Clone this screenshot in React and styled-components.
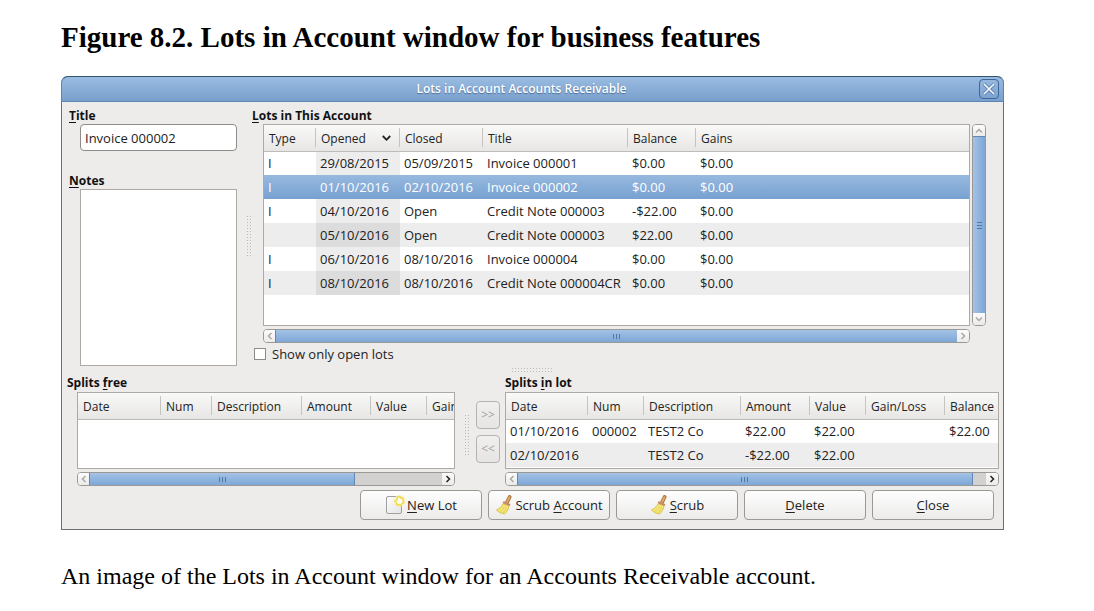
import React, { useState } from 'react';
import styled, { createGlobalStyle, css } from 'styled-components';

const lots = [
  { type: 'I', opened: '29/08/2015', closed: '05/09/2015', title: 'Invoice 000001', balance: '$0.00', gains: '$0.00' },
  { type: 'I', opened: '01/10/2016', closed: '02/10/2016', title: 'Invoice 000002', balance: '$0.00', gains: '$0.00' },
  { type: 'I', opened: '04/10/2016', closed: 'Open', title: 'Credit Note 000003', balance: '-$22.00', gains: '$0.00' },
  { type: '', opened: '05/10/2016', closed: 'Open', title: 'Credit Note 000003', balance: '$22.00', gains: '$0.00' },
  { type: 'I', opened: '06/10/2016', closed: '08/10/2016', title: 'Invoice 000004', balance: '$0.00', gains: '$0.00' },
  { type: 'I', opened: '08/10/2016', closed: '08/10/2016', title: 'Credit Note 000004CR', balance: '$0.00', gains: '$0.00' },
];

const splits = [
  ['01/10/2016', '000002', 'TEST2 Co', '$22.00', '$22.00', '', '$22.00'],
  ['02/10/2016', '', 'TEST2 Co', '-$22.00', '$22.00', '', ''],
];

const freeHeads = ['Date', 'Num', 'Description', 'Amount', 'Value', 'Gain/Loss'];
const lotHeads = [...freeHeads, 'Balance'];

const Chevron = ({ dir }) => {
  const paths = {
    left: 'M5.5 1 2.5 4 5.5 7',
    right: 'M2.5 1 5.5 4 2.5 7',
    up: 'M1 5.5 4 2.5 7 5.5',
    down: 'M1 2.5 4 5.5 7 2.5',
  };
  return (
    <svg width="8" height="8" viewBox="0 0 8 8" fill="none" stroke="currentColor" strokeWidth="1.5">
      <path d={paths[dir]} />
    </svg>
  );
};

const SortIcon = () => (
  <svg width="13" height="7" viewBox="0 0 13 7" fill="none" stroke="#222" strokeWidth="1.8">
    <path d="M.8 1 4.5 4.8 8.2 1" />
  </svg>
);

const CloseIcon = () => (
  <svg width="14" height="14" viewBox="0 0 14 14" fill="none">
    <path d="M2 2 12 12M12 2 2 12" stroke="#41689a" strokeWidth="3.2" opacity=".6" />
    <path d="M2 2 12 12M12 2 2 12" stroke="#f4f7fb" strokeWidth="1.7" />
  </svg>
);

const NewIcon = () => (
  <svg width="20" height="20" viewBox="0 0 20 20" fill="none">
    <defs>
      <linearGradient id="sheet" x1="0" y1="0" x2="1" y2="1">
        <stop offset="0" stopColor="#fdfdfd" />
        <stop offset="1" stopColor="#e2e3e2" />
      </linearGradient>
    </defs>
    <rect x="1.5" y="1.5" width="15" height="17" rx="1.5" fill="url(#sheet)" stroke="#a0a19f" />
    <circle cx="14.3" cy="5.7" r="5.6" fill="#fbf2a8" opacity=".75" />
    <path
      d="m14.4 1.4 1.5 1.9 2.5-.1-.5 2.4 1.3 2-2.3.9-.8 2.3-2-1.3-2.4.6v-2.4L9.900 6.100l2.200-1.100.3-2.300Z"
      fill="#fffef4"
      stroke="#f0dc4a"
      strokeWidth="1.5"
      strokeLinejoin="round"
    />
  </svg>
);

const BroomIcon = () => (
  <svg width="18" height="20" viewBox="0 0 18 20" fill="none">
    <path d="M14.6 2 12 7.4" stroke="#a8743c" strokeWidth="3.8" strokeLinecap="round" />
    <path d="M14.4 2.2 11.900 7.400" stroke="#e0a968" strokeWidth="2" strokeLinecap="round" />
    <path
      d="M8 8.600C6.800 11.600 4.400 13.600 1.400 15c2 2 4.800 3.600 8.200 4 2.400-2.200 4-4.800 4.400-8.200L8 8.600Z"
      fill="#f5e678"
      stroke="#d0b63c"
      strokeWidth=".8"
      strokeLinejoin="round"
    />
    <path d="M9.400 11.500c-.9 2.300-2.400 3.700-4.600 4.800M11.400 12c-.5 2.300-1.800 4.200-3.600 6" stroke="#dcc652" strokeWidth=".8" />
    <path d="m9 7.500 5.200 2.200" stroke="#c98a6a" strokeWidth="2.200" strokeLinecap="round" />
  </svg>
);

const ScrollBar = ({ vertical, size = 100, backOff = true, nextOff = true }) => (
  <Track $vertical={vertical}>
    <ScrollButton type="button" disabled={backOff} aria-label={vertical ? 'Up' : 'Left'}>
      <Chevron dir={vertical ? 'up' : 'left'} />
    </ScrollButton>
    <Trough $vertical={vertical}>
      <Thumb $vertical={vertical} $size={size}>
        <i />
        <i />
        <i />
      </Thumb>
    </Trough>
    <ScrollButton type="button" disabled={nextOff} aria-label={vertical ? 'Down' : 'Right'}>
      <Chevron dir={vertical ? 'down' : 'right'} />
    </ScrollButton>
  </Track>
);

const SplitTable = ({ labelledBy, heads, widths, rows, minWidth }) => (
  <Table aria-labelledby={labelledBy} $minWidth={minWidth}>
    <colgroup>
      {widths.map((w, i) => (
        <Col key={i} $width={w} />
      ))}
    </colgroup>
    <thead>
      <tr>
        {heads.map(h => (
          <Head key={h}>{h}</Head>
        ))}
      </tr>
    </thead>
    <tbody>
      {rows.map(row => (
        <Row key={row[0]}>
          {row.map((cell, i) => (
            <Cell key={i}>{cell}</Cell>
          ))}
        </Row>
      ))}
    </tbody>
  </Table>
);

const App = () => {
  const [selected, setSelected] = useState(1);
  const [openOnly, setOpenOnly] = useState(false);

  return (
    <Page>
      <GlobalStyle />
      <Heading>Figure 8.2. Lots in Account window for business features</Heading>
      <Window>
        <TitleBar>
          <WindowTitle>Lots in Account Accounts Receivable</WindowTitle>
          <WindowClose type="button" aria-label="Close window">
            <CloseIcon />
          </WindowClose>
        </TitleBar>

        <TopPane>
          <Details>
            <Caption as="label" htmlFor="lot-title">
              <u>T</u>itle
            </Caption>
            <TitleInput id="lot-title" defaultValue="Invoice 000002" />
            <NotesCaption as="label" htmlFor="lot-notes">
              <u>N</u>otes
            </NotesCaption>
            <Notes id="lot-notes" />
          </Details>
          <Grip $vertical />
          <LotsPane>
            <Caption id="lots-caption">
              <u>L</u>ots in This Account
            </Caption>
            <LotsGrid>
              <Frame $height={202}>
                <Table aria-labelledby="lots-caption">
                  <colgroup>
                    <Col $width={52} />
                    <Col $width={84} />
                    <Col $width={83} />
                    <Col $width={145} />
                    <Col $width={68} />
                    <Col />
                  </colgroup>
                  <thead>
                    <tr>
                      <Head>Type</Head>
                      <Head>
                        <SortHead>
                          Opened <SortIcon />
                        </SortHead>
                      </Head>
                      <Head>Closed</Head>
                      <Head>Title</Head>
                      <Head>Balance</Head>
                      <Head>Gains</Head>
                    </tr>
                  </thead>
                  <tbody>
                    {lots.map((lot, i) => (
                      <Row key={lot.opened} $selected={i === selected} onClick={() => setSelected(i)}>
                        <Cell>{lot.type}</Cell>
                        <Cell $sorted>{lot.opened}</Cell>
                        <Cell>{lot.closed}</Cell>
                        <Cell>{lot.title}</Cell>
                        <Cell>{lot.balance}</Cell>
                        <Cell>{lot.gains}</Cell>
                      </Row>
                    ))}
                  </tbody>
                </Table>
              </Frame>
              <ScrollBar vertical />
              <ScrollBar />
            </LotsGrid>
            <CheckLabel>
              <CheckBox checked={openOnly} onChange={e => setOpenOnly(e.target.checked)} />
              Show only open lots
            </CheckLabel>
          </LotsPane>
        </TopPane>

        <GripRow>
          <Grip />
        </GripRow>

        <BottomPane>
          <FreePane>
            <Caption id="free-caption">
              Splits <u>f</u>ree
            </Caption>
            <SplitBody $indent>
              <Frame $height={77}>
                <SplitTable
                  labelledBy="free-caption"
                  heads={freeHeads}
                  widths={[83, 51, 90, 69, 56, 79]}
                  rows={[]}
                  minWidth={428}
                />
              </Frame>
              <ScrollBar size={75} nextOff={false} />
            </SplitBody>
          </FreePane>
          <Grip $vertical $low />
          <MoveButtons>
            <MoveButton type="button" disabled>
              &gt;&gt;
            </MoveButton>
            <MoveButton type="button" disabled>
              &lt;&lt;
            </MoveButton>
          </MoveButtons>
          <LotPane>
            <Caption id="in-lot-caption">
              Splits <u>i</u>n lot
            </Caption>
            <SplitBody>
              <Frame $height={77}>
                <SplitTable
                  labelledBy="in-lot-caption"
                  heads={lotHeads}
                  widths={[82, 56, 97, 69, 56, 79, null]}
                  rows={splits}
                />
              </Frame>
              <ScrollBar size={97} nextOff={false} />
            </SplitBody>
          </LotPane>
        </BottomPane>

        <Actions>
          <ActionButton type="button">
            <NewIcon />
            <span>
              <u>N</u>ew Lot
            </span>
          </ActionButton>
          <ActionButton type="button">
            <BroomIcon />
            <span>
              Scrub <u>A</u>ccount
            </span>
          </ActionButton>
          <ActionButton type="button">
            <BroomIcon />
            <span>
              <u>S</u>crub
            </span>
          </ActionButton>
          <ActionButton type="button">
            <span>
              <u>D</u>elete
            </span>
          </ActionButton>
          <ActionButton type="button">
            <span>
              <u>C</u>lose
            </span>
          </ActionButton>
        </Actions>
      </Window>
      <Description>An image of the Lots in Account window for an Accounts Receivable account.</Description>
    </Page>
  );
};

const GlobalStyle = createGlobalStyle`
  * {
    box-sizing: border-box;
  }
  body {
    margin: 0;
    background: #fff;
  }
  button, input, textarea {
    font: inherit;
    color: inherit;
    margin: 0;
  }
  svg {
    display: block;
    flex: none;
  }
  u {
    text-underline-offset: 2px;
  }
`;

const Page = styled.main`
  padding: 20px 90px 20px 61px;
  font-family: 'Liberation Serif', 'Times New Roman', serif;
  color: #000;
`;

const Heading = styled.h1`
  margin: 0 0 22px;
  font-size: 29px;
  line-height: 34px;
`;

const Description = styled.p`
  margin: 30px 0 0;
  font-size: 24px;
  line-height: 32px;
`;

const Window = styled.section`
  border: 1px solid #6f6f6f;
  border-top: 0;
  border-radius: 7px 7px 0 0;
  background: #edeceb;
  font-family: 'Open Sans', 'Noto Sans', sans-serif;
  font-size: 13px;
  line-height: 16px;
  color: #222;
`;

const TitleBar = styled.header`
  display: flex;
  align-items: center;
  height: 26px;
  margin: 0 -1px;
  padding: 0 4px 0 2px;
  border: 1px solid #5d86b8;
  border-top-color: #31566f;
  border-radius: 7px 7px 0 0;
  background: linear-gradient(#9abce2, #799fcc);
`;

const WindowTitle = styled.h2`
  flex: 1;
  margin: 0;
  text-align: center;
  font-size: 12px;
  font-weight: 600;
  line-height: 18px;
  color: #fff;
  text-shadow: 0 1px 1px #4d6f99;
`;

const WindowClose = styled.button`
  display: flex;
  align-items: center;
  justify-content: center;
  width: 20px;
  height: 20px;
  padding: 0;
  border: 1px solid #3f6797;
  border-radius: 4px;
  background: linear-gradient(#94b7de, #7ca3d1);
`;

const Caption = styled.h3`
  display: block;
  margin: 0;
  font-size: 12px;
  font-weight: 700;
  line-height: 16px;
  color: #111;
`;

const NotesCaption = styled(Caption)`
  margin-top: 22px;
`;

const TopPane = styled.div`
  display: flex;
  padding: 6px 17px 0 7px;
`;

const Details = styled.div`
  display: flex;
  flex-direction: column;
  width: 168px;
`;

const TitleInput = styled.input`
  height: 27px;
  margin-left: 11px;
  padding: 1px 4px 0;
  border: 1px solid #8e8c89;
  border-radius: 4px;
  background: #fff;
  outline: 0;
`;

const Notes = styled.textarea`
  flex: 1;
  margin-left: 11px;
  padding: 4px;
  border: 1px solid #adaaa6;
  background: #fff;
  resize: none;
  outline: 0;
`;

const Grip = styled.div`
  width: ${p => (p.$vertical ? 6 : 42)}px;
  height: ${p => (p.$vertical ? 42 : 6)}px;
  background: linear-gradient(#c4c2bf, #c4c2bf) 0 0 / 1px 100%;
  background: conic-gradient(from 270deg at 1px 1px, #bab8b4 90deg, transparent 0) 0 0 / 3px 3px;
  ${p =>
    p.$vertical &&
    css`
      align-self: center;
      margin: 0 0 0 10px;
    `}
  ${p =>
    p.$low &&
    css`
      margin-top: 10px;
    `}
`;

const GripRow = styled.div`
  display: flex;
  justify-content: center;
  padding: 2px 0 1px;
`;

const LotsPane = styled.div`
  flex: 1;
  min-width: 0;
  margin-left: -1px;
`;

const LotsGrid = styled.div`
  display: grid;
  grid-template-columns: minmax(0, 1fr) 14px;
  gap: 3px 2px;
  margin-left: 11px;
`;

const Frame = styled.div`
  min-height: ${p => p.$height}px;
  border: 1px solid #adaaa6;
  background: #fff;
  overflow: hidden;
`;

const Table = styled.table`
  width: 100%;
  min-width: ${p => (p.$minWidth ? `${p.$minWidth}px` : '0')};
  table-layout: fixed;
  border-collapse: collapse;
`;

const Col = styled.col`
  width: ${p => (p.$width ? `${p.$width}px` : 'auto')};
`;

const Head = styled.th`
  height: 26px;
  padding: 2px 5px 0;
  border-bottom: 1px solid #bdbbb8;
  background:
    linear-gradient(#c6c4c1, #c6c4c1) right center / 1px 19px no-repeat,
    linear-gradient(#f9f9f8, #e7e6e4);
  font-size: 12px;
  font-weight: 400;
  text-align: left;
  white-space: nowrap;

  &:last-child {
    background: linear-gradient(#f9f9f8, #e7e6e4);
  }
`;

const SortHead = styled.span`
  display: flex;
  align-items: center;
  justify-content: space-between;
`;

const Cell = styled.td`
  height: 24px;
  padding: 0 4px;
  white-space: nowrap;
  background: ${p => (p.$sorted ? 'rgba(0, 0, 0, 0.07)' : 'transparent')};
`;

const Row = styled.tr`
  cursor: default;

  &:nth-child(even) {
    background: #ededed;
  }

  ${p =>
    p.$selected &&
    css`
      && {
        background: linear-gradient(#97b9df, #77a1d1);
        color: #fff;
      }
      ${Cell} {
        background: transparent;
      }
    `}
`;

const Track = styled.div`
  display: flex;
  flex-direction: ${p => (p.$vertical ? 'column' : 'row')};
  ${p => (p.$vertical ? 'width' : 'height')}: 14px;
  border: 1px solid #9b9995;
  border-radius: 4px;
  background: #f4f4f3;
  overflow: hidden;
`;

const ScrollButton = styled.button`
  display: flex;
  flex: 0 0 12px;
  align-items: center;
  justify-content: center;
  padding: 0;
  border: 0;
  background: linear-gradient(#fcfcfc, #ebeae9);
  color: #222;

  &:disabled {
    color: #aaa8a5;
  }
`;

const Trough = styled.div`
  display: flex;
  flex-direction: ${p => (p.$vertical ? 'column' : 'row')};
  flex: 1;
  background: #d2d1cf;
`;

const Thumb = styled.div`
  display: flex;
  flex-direction: ${p => (p.$vertical ? 'column' : 'row')};
  flex: 0 0 ${p => p.$size}%;
  align-items: center;
  justify-content: center;
  gap: 2px;
  background: linear-gradient(${p => (p.$vertical ? '90deg, ' : '')}#a3c2e6, #7ea7d6);
  box-shadow: 0 0 0 1px #5f87b8;

  i {
    width: ${p => (p.$vertical ? 5 : 1)}px;
    height: ${p => (p.$vertical ? 1 : 5)}px;
    background: #4f78aa;
  }
`;

const CheckLabel = styled.label`
  display: flex;
  align-items: center;
  gap: 6px;
  margin-top: 3px;
  padding: 0 0 4px 2px;
`;

const CheckBox = styled.input.attrs({ type: 'checkbox' })`
  appearance: none;
  width: 12px;
  height: 12px;
  border: 1px solid #8e8c89;
  background: #fff;

  &:checked {
    background: #4f78aa;
    box-shadow: inset 0 0 0 2px #fff;
  }
`;

const BottomPane = styled.div`
  display: flex;
  padding: 0 4px 0 5px;
`;

const FreePane = styled.div`
  flex: 388 1 0;
  min-width: 0;
`;

const LotPane = styled.div`
  flex: 494 1 0;
  min-width: 0;
`;

const SplitBody = styled.div`
  display: grid;
  grid-template-columns: minmax(0, 1fr);
  gap: 3px;
  margin: 1px 0 0 ${p => (p.$indent ? 10 : 0)}px;
`;

const MoveButtons = styled.div`
  display: flex;
  flex-direction: column;
  justify-content: center;
  gap: 6px;
  margin: 0 5px;
  padding-top: 2px;
`;

const MoveButton = styled.button`
  width: 24px;
  height: 28px;
  padding: 0;
  border: 1px solid #b5b3b0;
  border-radius: 4px;
  background: linear-gradient(#f0efee, #e6e5e3);
  font-size: 12px;

  &:disabled {
    color: #a5a3a0;
  }
`;

const Actions = styled.footer`
  display: flex;
  justify-content: flex-end;
  gap: 6px;
  padding: 4px 9px 9px;
`;

const ActionButton = styled.button`
  display: flex;
  align-items: center;
  justify-content: center;
  gap: 2px;
  width: 122px;
  height: 30px;
  padding: 0;
  border: 1px solid #9b9995;
  border-radius: 4px;
  background: linear-gradient(#fefefe, #ecebea);
`;

export default App;
